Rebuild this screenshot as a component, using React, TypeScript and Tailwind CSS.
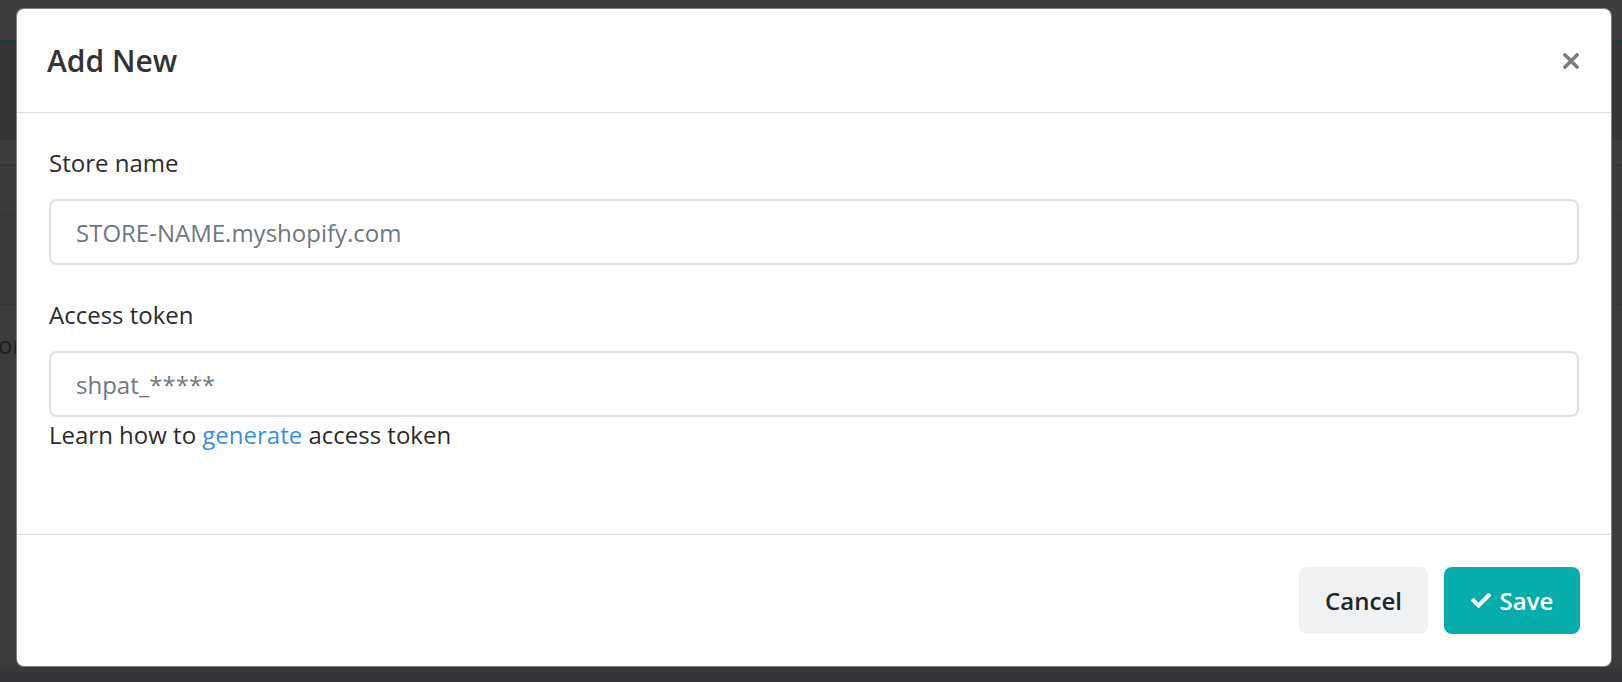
import React from "react";

function CheckIcon() {
  return (
    <svg width="20" height="15" viewBox="0 0 512 384" fill="currentColor" aria-hidden="true">
      <path d="M173.9 375.4L7.5 209c-10-10-10-26.2 0-36.2l36.2-36.2c10-10 26.2-10 36.2 0L192 248.7 432.1 8.6c10-10 26.2-10 36.2 0l36.2 36.2c10 10 10 26.2 0 36.2L210.1 375.4c-10 10-26.2 10-36.2 0z" />
    </svg>
  );
}

function CloseIcon() {
  return (
    <svg width="16" height="16" viewBox="0 0 16 16" aria-hidden="true">
      <path d="M2 2 L14 14 M14 2 L2 14" stroke="#7d7d7d" strokeWidth="3.6" strokeLinecap="square" />
    </svg>
  );
}

export default function App() {
  return (
    <div
      className="relative w-[1622px] h-[682px] overflow-hidden bg-[#3c3c3c]"
      style={{ fontFamily: '"Open Sans", "Liberation Sans", sans-serif' }}
    >
      {/* dimmed page behind the modal */}
      <div className="flex flex-col h-full">
        <div className="h-[40px] bg-[#3d3d3d]" />
        <div className="h-[3px] bg-[#243a3a]" />
        <div className="h-[97px] bg-[#333537]" />
        <div className="h-[25px] bg-[#3d3d3d] border-b border-[#353535]" />
        <div className="h-[50px] bg-[#3b3b3b] border-b border-[#353535]" />
        <div className="h-[90px] bg-[#3b3b3b] border-b border-[#343434]" />
        <div className="flex-1 bg-[#3c3c3c] pt-[22px]">
          <div className="-ml-[2px] text-[24px] leading-[36px] text-[#1c1c1c]">or</div>
        </div>
        <div className="h-[15px] bg-[#35373a]" />
      </div>

      {/* modal */}
      <div className="absolute left-[16px] top-[8px] w-[1596px] h-[659px] rounded-[8px] bg-white border border-[#2a2a2a]/60 flex flex-col">
        <div className="h-[104px] shrink-0 pl-[30px] pr-[31px] flex items-center justify-between border-b border-[#d6dbe0]">
          <h5 className="text-[30px] leading-[45px] font-semibold text-[#333333]">Add New</h5>
          <button className="w-[16px] h-[16px] flex items-center justify-center mr-[1px]">
            <CloseIcon />
          </button>
        </div>

        <div className="flex-1 px-[32px] pt-[32px] flex flex-col">
          <label className="block text-[24px] leading-[36px] text-[#2b2b2b] mb-[18px]">Store name</label>
          <input
            className="h-[66px] w-full rounded-[8px] border-2 border-[#dde1e6] px-[25px] text-[24px] text-[#495057] outline-none placeholder:text-[#6f7780]"
            placeholder="STORE-NAME.myshopify.com"
          />
          <label className="block text-[24px] leading-[36px] text-[#2b2b2b] mt-[32px] mb-[18px]">Access token</label>
          <input
            className="h-[66px] w-full rounded-[8px] border-2 border-[#dde1e6] px-[25px] text-[24px] text-[#495057] outline-none placeholder:text-[#6f7780]"
            placeholder="shpat_*****"
          />
          <p className="text-[24px] leading-[36px] text-[#2b2b2b]">
            Learn how to <span className="text-[#3a8fe4]">generate</span> access token
          </p>
        </div>

        <div className="h-[132px] shrink-0 border-t border-[#d6dbe0] px-[31px] flex items-center justify-end gap-[16px]">
          <button className="w-[129px] h-[67px] rounded-[8px] bg-[#f0f1f3] text-[24px] font-semibold text-[#212529]">
            Cancel
          </button>
          <button className="w-[136px] h-[67px] rounded-[8px] bg-[#07adab] text-[24px] font-semibold text-white flex items-center justify-center gap-[9px]">
            <CheckIcon />
            <span>Save</span>
          </button>
        </div>
      </div>
    </div>
  );
}
